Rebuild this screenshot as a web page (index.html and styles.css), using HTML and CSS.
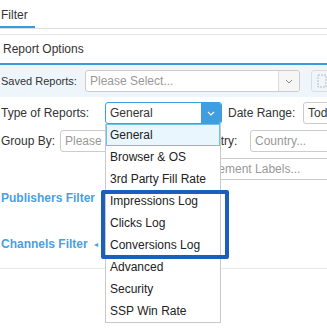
FILE: index.html
```html
<!DOCTYPE html>
<html lang="en">
<head>
    <meta charset="UTF-8">
    <title>Report Filter</title>
    <link rel="stylesheet" href="styles.css">
</head>
<body>
    <div class="tabs">
        <div class="tab active">Filter</div>
    </div>

    <div class="panel">
        <div class="panel-heading">Report Options</div>

        <div class="saved-row">
            <div class="label saved-label">Saved Reports:</div>
            <div class="select saved-select">
                <span class="placeholder">Please Select...</span>
                <span class="select-arrow">
                    <svg width="8" height="5" viewBox="0 0 8 5"><path d="M1 1 L4 4 L7 1" fill="none" stroke="#888" stroke-width="1"/></svg>
                </span>
            </div>
            <div class="icon-button">
                <svg width="10" height="14" viewBox="0 0 10 14"><rect x="1" y="1" width="8" height="12" fill="none" stroke="#bbb" stroke-dasharray="2 1"/></svg>
            </div>
        </div>

        <div class="form-row type-row">
            <div class="label type-label">Type of Reports:</div>
            <div class="select type-select">
                <span class="value">General</span>
                <span class="select-arrow blue">
                    <svg width="8" height="5" viewBox="0 0 8 5"><path d="M1 1 L4 4 L7 1" fill="none" stroke="#fff" stroke-width="1.2"/></svg>
                </span>
            </div>
            <div class="label date-label">Date Range:</div>
            <div class="select date-select"><span class="value">Today</span></div>
        </div>

        <div class="form-row group-row">
            <div class="label group-label">Group By:</div>
            <div class="select group-select"><span class="placeholder">Please Select...</span></div>
            <div class="label country-label">Country:</div>
            <div class="select country-select"><span class="placeholder">Country...</span></div>
        </div>

        <div class="form-row labels-row">
            <div class="select labels-select"><span class="placeholder">Placement Labels...</span></div>
        </div>

        <div class="filter-link publishers">Publishers Filter</div>
        <div class="filter-link channels">Channels Filter <span class="caret">&#9666;</span></div>

        <div class="divider"></div>

        <ul class="dropdown">
            <li class="selected">General</li>
            <li>Browser &amp; OS</li>
            <li>3rd Party Fill Rate</li>
            <li>Impressions Log</li>
            <li>Clicks Log</li>
            <li>Conversions Log</li>
            <li>Advanced</li>
            <li>Security</li>
            <li>SSP Win Rate</li>
        </ul>
        <div class="highlight"></div>
    </div>
</body>
</html>
```

FILE: styles.css
```css
body {
    margin: 0;
    font-family: 'Liberation Sans', Arial, sans-serif;
    font-size: 12px;
    color: #333;
    background: #fff;
    overflow: hidden;
    width: 327px;
    height: 336px;
}
.tabs {
    height: 28px;
    border-bottom: 1px solid #dedede;
    display: flex;
}
.tab {
    padding: 8px 0 0 1px;
    width: 34px;
    height: 18px;
    border-bottom: 2px solid #3a9bdc;
    color: #333;
}
.panel {
    position: relative;
    margin-top: 5px;
    border-top: 1px solid #e6e6e6;
}
.panel-heading {
    height: 28px;
    line-height: 28px;
    padding-left: 3px;
    border-bottom: 2px solid #3a9bdc;
}
.saved-row {
    background: #eef6fc;
    height: 32px;
    display: flex;
    align-items: center;
    width: 400px;
}
.label {
    flex-shrink: 0;
    white-space: nowrap;
}
.saved-label {
    width: 84px;
    padding-left: 1px;
    font-size: 11px;
}
.select {
    box-sizing: border-box;
    height: 22px;
    border: 1px solid #ccc;
    border-radius: 3px;
    background: #fff;
    display: flex;
    align-items: center;
    padding-left: 4px;
    flex-shrink: 0;
    position: relative;
    white-space: nowrap;
    overflow: hidden;
}
.placeholder {
    color: #999;
    flex: 1;
}
.value {
    flex: 1;
}
.select-arrow {
    width: 20px;
    align-self: stretch;
    border-left: 1px solid #ddd;
    background: #f6f6f6;
    display: flex;
    align-items: center;
    justify-content: center;
}
.select-arrow.blue {
    background: #3f9ee0;
    border-left: none;
}
.saved-select {
    width: 215px;
}
.icon-button {
    margin-left: 11px;
    width: 30px;
    height: 22px;
    box-sizing: border-box;
    border: 1px solid #ddd;
    border-radius: 3px;
    display: flex;
    align-items: center;
    padding-left: 5px;
}
.form-row {
    display: flex;
    align-items: center;
    width: 450px;
}
.type-row {
    margin-top: 5px;
}
.type-label {
    width: 104px;
    padding-left: 1px;
}
.type-select {
    width: 117px;
    border-color: #3f9ee0;
    padding-left: 4px;
}
.date-label {
    margin-left: 6px;
    width: 75px;
}
.date-select {
    width: 100px;
}
.group-row {
    margin-top: 6px;
}
.group-label {
    width: 59px;
    padding-left: 1px;
}
.group-select {
    width: 128px;
}
.country-label {
    margin-left: 4px;
    width: 58px;
}
.country-select {
    width: 120px;
}
.labels-row {
    margin-top: 6px;
    padding-left: 190px;
}
.labels-select {
    width: 200px;
}
.filter-link {
    color: #4b9fe1;
    font-weight: bold;
    padding-left: 1px;
}
.publishers {
    margin-top: 11px;
}
.channels {
    margin-top: 32px;
}
.caret {
    font-size: 8px;
    font-weight: normal;
    margin-left: 3px;
    vertical-align: 1px;
}
.divider {
    margin-top: 17px;
    border-top: 1px solid #e8e8e8;
}
.dropdown {
    position: absolute;
    top: 89px;
    left: 105px;
    width: 116px;
    margin: 0;
    padding: 0;
    list-style: none;
    background: #fff;
    border: 1px solid #c9c9c9;
    border-top: none;
    box-sizing: border-box;
}
.dropdown li {
    height: 22px;
    line-height: 22px;
    padding-left: 4px;
    color: #222;
    white-space: nowrap;
}
.dropdown li.selected {
    background: #eaf6fd;
    outline: 1px solid #6cc3ea;
    outline-offset: -1px;
}
.highlight {
    position: absolute;
    top: 155px;
    left: 101px;
    width: 128px;
    height: 69px;
    box-sizing: border-box;
    border: 4px solid #1c5ebd;
    border-radius: 2px;
}
```
